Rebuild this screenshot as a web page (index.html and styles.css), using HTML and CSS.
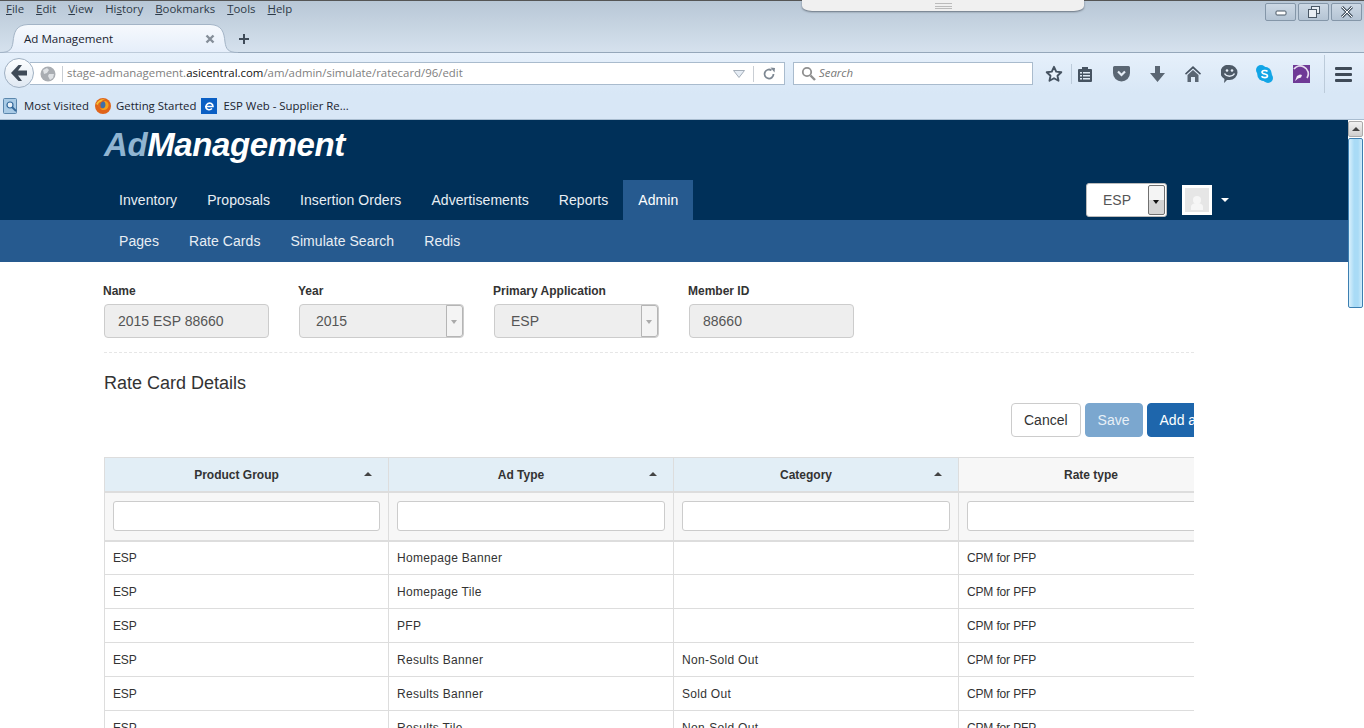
FILE: index.html
```html
<!DOCTYPE html>
<html>
	<head>
		<meta charset="UTF-8">
		<title>Ad Management</title>
		<link rel="stylesheet" href="styles.css">
	</head>
	<body>
		<!--browser window-->
		<div class="chrome">
			<div class="notch"><span class="grip"></span></div>
			<div class="winBtns">
				<span class="winBtn"><svg width="12" height="10" viewBox="0 0 12 10"><rect x="1" y="4" width="10" height="4" rx="1" fill="#fff" stroke="#4a5866"/></svg></span>
				<span class="winBtn"><svg width="14" height="12" viewBox="0 0 14 12"><rect x="4.5" y="0.5" width="8" height="7" fill="#e8eef4" stroke="#4a5866"/><rect x="1.5" y="3.5" width="8" height="8" fill="#e8eef4" stroke="#4a5866"/></svg></span>
				<span class="winBtn"><svg width="14" height="12" viewBox="0 0 14 12"><path d="M2 1l10 10M12 1L2 11" stroke="#4a5866" stroke-width="3"/><path d="M2 1l10 10M12 1L2 11" stroke="#fff" stroke-width="1"/></svg></span>
			</div>
			<ul class="menuBar">
				<li><u>F</u>ile</li>
				<li><u>E</u>dit</li>
				<li><u>V</u>iew</li>
				<li>Hi<u>s</u>tory</li>
				<li><u>B</u>ookmarks</li>
				<li><u>T</u>ools</li>
				<li><u>H</u>elp</li>
			</ul>
			<div class="tabRow">
				<div class="tab">
					<svg class="tabShape" width="238" height="29" viewBox="0 0 238 29"><defs><linearGradient id="tabFill" x1="0" y1="0" x2="0" y2="1"><stop offset="0" stop-color="#f6f9fd"/><stop offset="1" stop-color="#e5eefa"/></linearGradient></defs><path d="M0 28.5C10 28.5 12 25 13 18C14 8 16 1 28 .5H210C222 1 224 8 225 18C226 25 228 28.5 238 28.5" fill="url(#tabFill)" stroke="#a3b4c6"/></svg>
					<span class="tabTitle">Ad Management</span>
					<svg class="tabClose" width="10" height="10" viewBox="0 0 10 10"><path d="M1.5 1.5l7 7M8.5 1.5l-7 7" stroke="#858e99" stroke-width="2.4"/></svg>
				</div>
				<svg class="newTab" width="12" height="12" viewBox="0 0 12 12"><path d="M6 1v10M1 6h10" stroke="#3f4b58" stroke-width="2"/></svg>
			</div>
			<div class="navBar">
				<div class="backBtn"><svg width="18" height="16" viewBox="0 0 18 16"><path d="M8.500 0L1 8l7.500 8h3.500L8 10.500h9v-5H8L12 0z" fill="#3f4a57"/></svg></div>
				<div class="urlBar">
					<svg class="globe" width="16" height="16" viewBox="0 0 16 16"><circle cx="8" cy="8" r="7.500" fill="#a9adb2"/><path d="M3 4l4-2 2 2-2 3-3 1zM9 8l5 0-1 4-3 2-2-4z" fill="#dfe2e5"/></svg>
					<span class="urlSep"></span>
					<span class="urlText">stage-admanagement.<b>asicentral.com</b>/am/admin/simulate/ratecard/96/edit</span>
					<svg class="urlDrop" width="12" height="8" viewBox="0 0 12 8"><path d="M.5.500h11L6 7.500z" fill="#e6edf5" stroke="#a4aeb9"/></svg>
					<span class="urlSep2"></span>
					<svg class="reload" width="14" height="14" viewBox="0 0 14 14"><path d="M11.500 7A4.500 4.500 0 1 1 9.500 3.300" fill="none" stroke="#7d8792" stroke-width="1.800"/><path d="M8.500 .5l4.500 .5-.5 4.500z" fill="#7d8792"/></svg>
				</div>
				<div class="searchBar">
					<svg width="15" height="15" viewBox="0 0 15 15"><circle cx="6" cy="6" r="4.200" fill="none" stroke="#8f8f8f" stroke-width="1.800"/><path d="M9.500 9.500l4.500 4.500" stroke="#8f8f8f" stroke-width="2.400"/></svg>
					<span>Search</span>
				</div>
				<div class="tools">
					<span class="tool star"><svg width="18" height="18" viewBox="0 0 18 18"><path d="M9 1.800l2.200 4.800 5.100.6-3.800 3.500 1 5.100L9 13.200l-4.500 2.600 1-5.100L1.700 7.200l5.100-.6z" fill="#eaf2fb" stroke="#465361" stroke-width="1.900" stroke-linejoin="round"/></svg></span>
					<span class="toolSep"></span>
					<span class="tool clip"><svg width="14" height="16" viewBox="0 0 14 16"><path d="M1 3h3V1h6v2h3a1 1 0 0 1 1 1v11a1 1 0 0 1-1 1H1a1 1 0 0 1-1-1V4a1 1 0 0 1 1-1z" fill="#465361"/><path d="M2 6h2v1.500H2zM5 6h7v1.500H5zM2 9h2v1.500H2zM5 9h7v1.500H5zM2 12h2v1.500H2zM5 12h7v1.500H5z" fill="#dfe9f4"/></svg></span>
					<span class="tool"><svg width="17" height="16" viewBox="0 0 17 16"><path d="M1.500 0h14A1.500 1.500 0 0 1 17 1.500V7A8.500 8.500 0 0 1 0 7V1.500A1.500 1.500 0 0 1 1.500 0z" fill="#5a6673"/><path d="M5 5.500l3.500 3.500L12 5.500" fill="none" stroke="#e6eef7" stroke-width="2.200"/></svg></span>
					<span class="tool"><svg width="15" height="16" viewBox="0 0 15 16"><path d="M5 0h5v7h5l-7.500 9L0 7h5z" fill="#5a6673"/></svg></span>
					<span class="tool"><svg width="16" height="16" viewBox="0 0 16 16"><path d="M8 0L0 7.500l1 1.200L8 2.500l7 6.200 1-1.200z" fill="#465361"/><path d="M2.500 9L8 4l5.500 5v7H10v-5H6v5H2.500z" fill="#5a6673"/></svg></span>
					<span class="tool"><svg width="17" height="18" viewBox="0 0 17 18"><path d="M8.500 0a8 7.500 0 0 1 0 15H6l-3 3 .5-4A7.500 7.500 0 0 1 8.500 0z" fill="#4e5a67"/><circle cx="6" cy="5.500" r="1.300" fill="#e6eef7"/><circle cx="11" cy="5.500" r="1.300" fill="#e6eef7"/><path d="M3.500 8.500c2 3.500 8 3.500 10 0" fill="none" stroke="#e6eef7" stroke-width="1.500"/></svg></span>
					<span class="tool skype"><svg width="17" height="18" viewBox="0 0 17 18"><circle cx="5" cy="5" r="5" fill="#12a5e6"/><circle cx="12" cy="13" r="5" fill="#12a5e6"/><circle cx="8.500" cy="9" r="7.300" fill="#12a5e6"/><path d="M11.500 6.500C10.500 5 6 5 6 7.200c0 2.300 5.500 1.500 5.500 3.800 0 2.200-4.800 2-6 .3" fill="none" stroke="#fff" stroke-width="1.600"/></svg></span>
					<span class="tool"><svg width="17" height="18" viewBox="0 0 17 18"><rect width="17" height="18" fill="#6f3a96"/><path d="M1 4a7.500 7.500 0 0 1 10-2 7.500 7.500 0 0 1 3 11" fill="none" stroke="#e8def0" stroke-width="1.700"/><path d="M2 16l2-5 3-1.500 2 .5-1 2.500-3 1z" fill="#f3eef7"/></svg></span>
					<span class="toolSep tall"></span>
					<span class="burger"><i></i><i></i><i></i></span>
				</div>
			</div>
			<div class="bookmarks">
				<span class="bmark first"><svg width="15" height="16" viewBox="0 0 15 16"><rect x=".5" y=".5" width="13" height="15" rx="1" fill="#a9cbe6" stroke="#5b87ad"/><circle cx="7" cy="7" r="3" fill="#e8f2fa" stroke="#33689a" stroke-width="1.200"/><path d="M9 9l4 4" stroke="#33689a" stroke-width="1.800"/></svg><span>Most Visited</span></span>
				<span class="bmark second"><svg width="16" height="16" viewBox="0 0 16 16"><circle cx="8" cy="8" r="8" fill="#e0641a"/><circle cx="9" cy="7" r="3.600" fill="#3f6fa8"/><path d="M9 3c3-.5 5 2 4.500 5-.5 3-3 4.500-6 4-2.500-.5-4-3-3.500-5.500C3 9 5 11 8 10.500 10.500 10 11.500 6 9 3z" fill="#f4a21c"/><path d="M1 6c2-4 6-5.500 9-4.500-2 0-3 1-3.500 2C4.500 4 3 5 3 7z" fill="#f6c234"/></svg><span>Getting Started</span></span>
				<span class="bmark third"><svg width="16" height="16" viewBox="0 0 16 16"><rect width="16" height="16" fill="#0a5fc4"/><path d="M4 8.500h8C12 5.500 9 4.500 7 5.500 4.500 7 4 10.500 7 11.500c1.500.5 3 0 4-1" fill="none" stroke="#fff" stroke-width="1.600"/></svg><span>ESP Web - Supplier Re...</span></span>
			</div>
		</div>

		<!--page plus scrollbar-->
		<div class="viewport">
			<div class="page">
				<div class="mainHead">
					<div class="logo"><em>Ad</em>Management</div>
					<div class="mainNav">
						<ul class="navList">
							<li>Inventory</li>
							<li>Proposals</li>
							<li>Insertion Orders</li>
							<li>Advertisements</li>
							<li>Reports</li>
							<li class="on">Admin</li>
						</ul>
						<div class="appSelect"><span>ESP</span><i class="appArrow"></i></div>
						<div class="avatar"><svg width="24" height="24" viewBox="0 0 24 24"><rect width="24" height="24" fill="#e6e6e6"/><circle cx="12" cy="12" r="4" fill="#f6f6f6"/><path d="M6 22v-3c0-3 3-4 6-4s6 1 6 4v3z" fill="#f6f6f6"/></svg></div>
						<i class="userCaret"></i>
					</div>
				</div>
				<ul class="subNav">
					<li>Pages</li>
					<li>Rate Cards</li>
					<li>Simulate Search</li>
					<li>Redis</li>
				</ul>
				<div class="content">
					<div class="formRow">
						<div class="field"><label>Name</label><div class="fake">2015 ESP 88660</div></div>
						<div class="field"><label>Year</label><div class="fake sel">2015<i class="selBtn"></i></div></div>
						<div class="field"><label>Primary Application</label><div class="fake sel">ESP<i class="selBtn"></i></div></div>
						<div class="field"><label>Member ID</label><div class="fake">88660</div></div>
					</div>
					<h3 class="title">Rate Card Details</h3>
					<div class="actions">
						<button class="btn cancel">Cancel</button>
						<button class="btn save">Save</button>
						<button class="btn add">Add a Rate</button>
					</div>
					<div class="tableWrap">
						<table class="rates">
							<thead>
								<tr class="heads">
									<th class="sorted">Product Group<i></i></th>
									<th class="sorted">Ad Type<i></i></th>
									<th class="sorted">Category<i></i></th>
									<th>Rate type</th>
								</tr>
								<tr class="filters">
									<th><input type="text"></th>
									<th><input type="text"></th>
									<th><input type="text"></th>
									<th><input type="text"></th>
								</tr>
							</thead>
							<tbody>
								<tr><td>ESP</td><td>Homepage Banner</td><td></td><td>CPM for PFP</td></tr>
								<tr><td>ESP</td><td>Homepage Tile</td><td></td><td>CPM for PFP</td></tr>
								<tr><td>ESP</td><td>PFP</td><td></td><td>CPM for PFP</td></tr>
								<tr><td>ESP</td><td>Results Banner</td><td>Non-Sold Out</td><td>CPM for PFP</td></tr>
								<tr><td>ESP</td><td>Results Banner</td><td>Sold Out</td><td>CPM for PFP</td></tr>
								<tr><td>ESP</td><td>Results Tile</td><td>Non-Sold Out</td><td>CPM for PFP</td></tr>
							</tbody>
						</table>
					</div>
				</div>
			</div>
			<div class="scrollbar">
				<div class="scrollUp"><i></i></div>
				<div class="scrollThumb"></div>
			</div>
		</div>
	</body>
</html>
```

FILE: styles.css
```css
*{
	margin:0;
	padding:0;
	list-style: none;
	box-sizing: border-box;
}
html,body{
	height:100%;
	overflow: hidden;
}
body{
	width:1364px;
	height:728px;
	font-family: "Liberation Sans", Arial, sans-serif;
	background: #fff;
}

/* browser chrome */
.chrome{
	position: relative;
	height:120px;
	font-family: "Open Sans", sans-serif;
	font-size:11.4px;
	color:#1c2733;
	background: linear-gradient(#b8c7d6, #d6e2ee 52px);
	border-top:1px solid #555;
}
.notch{
	position: absolute;
	left:802px;
	top:-1px;
	width:282px;
	height:11px;
	background: #f0f0f0;
	border-radius: 0 0 10px 10px / 0 0 5px 5px;
	box-shadow: 0 1px 2px #67727e;
	display: flex;
	justify-content: center;
}
.grip{
	width:17px;
	height:6px;
	margin-top:3px;
	border-top:1px solid #bbb;
	border-bottom:1px solid #bbb;
	background: linear-gradient(transparent 2px, #bbb 2px, #bbb 3px, transparent 3px);
}
.winBtns{
	position: absolute;
	right:2px;
	top:2px;
	display: flex;
	gap:2px;
}
.winBtn{
	width:31px;
	height:18px;
	border:1px solid #8496a8;
	border-radius: 2px;
	background: linear-gradient(#ccd8e4, #b4c4d4);
	display: flex;
	align-items: center;
	justify-content: center;
}
.menuBar{
	display: flex;
	height:17px;
	padding-left:6px;
	line-height:15px;
	color:#2d3a48;
}
.menuBar li{
	margin-right:12px;
}
.tabRow{
	display: flex;
	align-items: center;
	height:35px;
	position: relative;
	border-bottom:1px solid #95a7ba;
}
.tab{
	position: relative;
	width:238px;
	height:35px;
	margin-top:1px;
}
.tabShape{
	position: absolute;
	left:0;
	top:6px;
}
.tabTitle{
	position: absolute;
	left:24px;
	top:12px;
	line-height:17px;
	color:#1a2430;
	font-size:11.6px;
}
.tabClose{
	position: absolute;
	left:205px;
	top:16px;
}
.newTab{
	margin-top:7px;
}
.navBar{
	position: relative;
	display: flex;
	align-items: flex-start;
	height:40px;
	padding:9px 0 0 30px;
	background: linear-gradient(#e6f0fb, #d8e7f6);
}
.backBtn{
	position: absolute;
	left:4px;
	top:5px;
	width:30px;
	height:30px;
	border-radius: 50%;
	border:1px solid #9fb0c2;
	background: linear-gradient(#fdfeff, #dfe8f2);
	display: flex;
	align-items: center;
	justify-content: center;
	z-index: 1;
}
.urlBar{
	display: flex;
	align-items: center;
	width:755px;
	height:23px;
	background: #fff;
	border:1px solid #a9bbcd;
	border-left:none;
	padding-left:10px;
}
.urlSep{
	width:1px;
	height:16px;
	background: #c9ced4;
	margin:0 4px 0 6px;
}
.urlText{
	color:#808080;
	width:665px;
	padding-bottom:2px;
	white-space: nowrap;
}
.urlText b{
	color:#111;
	font-weight: normal;
}
.urlSep2{
	width:1px;
	height:16px;
	background: #c9ced4;
	margin:0 8px;
}
.urlDrop{
	margin-left:1px;
}
.searchBar{
	display: flex;
	align-items: center;
	gap:3px;
	width:240px;
	height:23px;
	margin-left:8px;
	padding-left:7px;
	background: #fff;
	border:1px solid #a9bbcd;
	color:#777;
	font-style: italic;
}
.searchBar span{
	padding-bottom:2px;
}
.tools{
	display: flex;
	align-items: center;
	height:24px;
	margin-left:3px;
}
.tool{
	width:36px;
	display: flex;
	justify-content: center;
}
.star{
	margin-right:-1px;
}
.clip{
	margin-left:-5px;
}
.skype{
	padding-right:1px;
}
.toolSep{
	width:1px;
	height:20px;
	background: #bccbda;
}
.toolSep.tall{
	height:38px;
	margin-left:5px;
}
.burger{
	width:17px;
	margin-left:10px;
	display: flex;
	flex-direction: column;
	gap:3px;
}
.burger i{
	height:3px;
	background: #3f4a57;
	border-radius: 1px;
}
.bookmarks{
	display: flex;
	align-items: center;
	height:27px;
	background: #d8e7f6;
	border-bottom:1px solid #a9bdd0;
	padding-left:3px;
	color:#1a2430;
}
.bmark{
	display: flex;
	align-items: center;
	gap:6px;
	white-space: nowrap;
}
.bmark span{
	padding-bottom:2px;
}
.second{
	margin-left:6px;
	gap:5px;
}
.third{
	margin-left:5px;
}

/* page */
.viewport{
	display: flex;
	height:608px;
}
.page{
	width:1348px;
	height:608px;
	overflow: hidden;
}
.mainHead{
	height:100px;
	background: #003059;
	padding-left:104px;
}
.logo{
	height:60px;
	padding-top:5px;
	font-size:33px;
	line-height:40px;
	letter-spacing: -.4px;
	font-weight: bold;
	font-style: italic;
	color:#fff;
}
.logo em{
	color:#8fb4d1;
}
.mainNav{
	display: flex;
	align-items: center;
	height:40px;
}
.navList{
	display: flex;
	width:982px;
}
.navList li{
	height:40px;
	line-height:40px;
	padding:0 15px;
	font-size:14px;
	letter-spacing: .065px;
	color:#e8eef4;
}
.navList li.on{
	background: #265a8f;
	color:#fff;
}
.appSelect{
	display: flex;
	justify-content: space-between;
	width:81px;
	height:34px;
	padding:1px;
	background: #fff;
	border:1px solid #bbb;
	border-radius: 3px;
	color:#555;
	font-size:14px;
	line-height:30px;
}
.appSelect span{
	padding-left:15px;
}
.appArrow{
	position: relative;
	width:17px;
	border:1px solid #707070;
	border-radius: 2px;
	background: linear-gradient(#f4f4f4 50%, #d4d4d4 50%);
}
.appArrow:after,
.selBtn:after{
	content: "";
	position: absolute;
	left:4px;
	top:14px;
	border:3.500px solid transparent;
	border-top:4px solid #111;
	border-bottom:none;
}
.avatar{
	width:30px;
	height:30px;
	margin-left:15px;
	padding:3px;
	background: #fff;
}
.userCaret{
	margin-left:9px;
	border:4px solid transparent;
	border-top:4px solid #fff;
	border-bottom:none;
}
.subNav{
	display: flex;
	height:42px;
	padding-left:104px;
	background: #265a8f;
}
.subNav li{
	padding:0 15px;
	line-height:42px;
	font-size:14px;
	letter-spacing: .065px;
	color:#e8eef4;
}
.content{
	width:1090px;
	margin-left:104px;
}
.formRow{
	display: flex;
	gap:30px;
	height:91px;
	padding-top:21px;
	border-bottom:1px dashed #e6e6e6;
}
.field{
	width:165px;
}
.field label{
	display: block;
	height:21px;
	margin-left:-1px;
	font-size:12px;
	font-weight: bold;
	line-height:17px;
	color:#333;
}
.fake{
	position: relative;
	height:34px;
	padding-left:13px;
	line-height:32px;
	font-size:14px;
	color:#555;
	background: #eee;
	border:1px solid #ccc;
	border-radius: 4px;
}
.fake.sel{
	padding-left:16px;
}
.selBtn{
	position: absolute;
	right:0;
	top:0;
	width:17px;
	height:32px;
	background: #f4f4f4;
	border:1px solid #b5b5b5;
	border-radius: 0 3px 3px 0;
}
.selBtn:after{
	left:4px;
	top:14px;
	border-top-color:#aaa;
}
.title{
	margin-top:20px;
	height:20px;
	font-size:18px;
	line-height:20px;
	font-weight: normal;
	color:#333;
}
.actions{
	display: flex;
	gap:4px;
	overflow: hidden;
	margin-top:10px;
	height:34px;
	padding-left:907px;
}
.btn{
	height:34px;
	flex-shrink: 0;
	padding:0 12px;
	font-family: inherit;
	font-size:14px;
	border:1px solid #ccc;
	border-radius: 4px;
	background: #fff;
	color:#333;
	white-space: nowrap;
}
.save{
	background: #7ba7cf;
	border-color:#7ba7cf;
	color:#e8f0f7;
}
.add{
	background: #1e66ac;
	border-color:#1e66ac;
	color:#fff;
}
.tableWrap{
	margin-top:20px;
	overflow: hidden;
}
.rates{
	table-layout: fixed;
	width:1140px;
	border-collapse: collapse;
	font-size:12px;
	color:#333;
}
.heads th:first-child{
	width:284px;
}
.rates th,
.rates td{
	border:1px solid #ddd;
}
.heads th{
	position: relative;
	height:34px;
	padding:2px 28px 0 8px;
	background: #f7f7f7;
	border-bottom-width:2px;
	color:#333;
}
.heads th.sorted{
	background: #e2eef6;
}
.heads i{
	position: absolute;
	right:16px;
	top:14px;
	border:4px solid transparent;
	border-bottom:4px solid #444;
	border-top:none;
}
.filters th{
	height:49px;
	padding:0 8px 1px;
	background: #f7f7f7;
	border-bottom-width:2px;
}
.rates input{
	display: block;
	width:100%;
	height:30px;
	border:1px solid #ccc;
	border-radius: 3px;
	background: #fff;
}
.rates td{
	height:34px;
	padding:0 8px;
	letter-spacing: .3px;
}
.rates td:first-child,
.rates td:last-child{
	letter-spacing: -.15px;
}

/* scrollbar */
.scrollbar{
	width:16px;
	padding:1px 1px 0 0;
	background: #fff;
}
.scrollUp{
	position: relative;
	height:16px;
	border:1px solid #aaa;
	border-radius: 2px;
	background: linear-gradient(#f2f2f2, #cfcfcf);
}
.scrollUp i{
	position: absolute;
	left:3px;
	top:5px;
	border:4px solid transparent;
	border-bottom:4px solid #444;
	border-top:none;
}
.scrollThumb{
	height:170px;
	margin-top:1px;
	border:1px solid #3c7fb1;
	border-radius: 2px;
	background: linear-gradient(90deg, #d9f0fc, #a9dbf6 40%, #a9dbf6 70%, #d0ecfa);
}
```
